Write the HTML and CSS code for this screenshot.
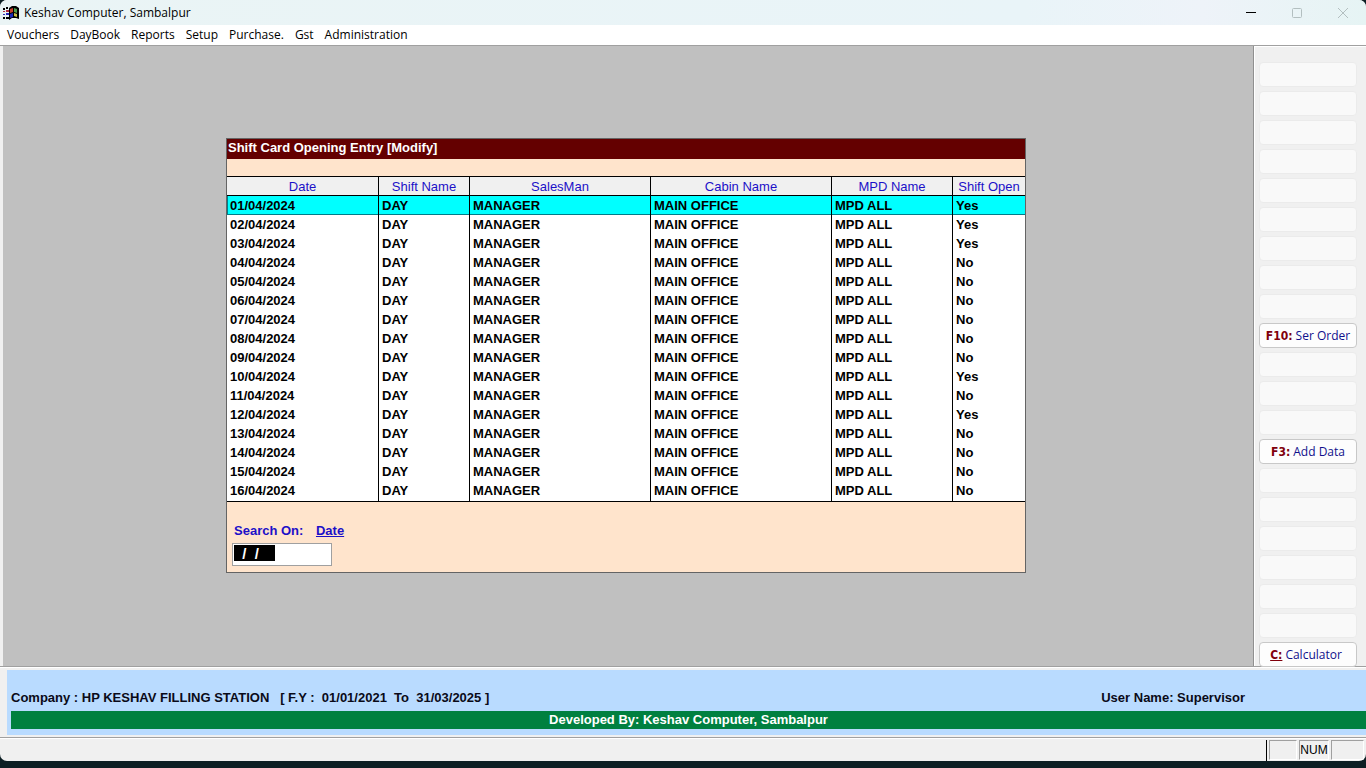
FILE: index.html
```html
<!DOCTYPE html>
<html lang="en">
<head>
<meta charset="utf-8">
<title>Keshav Computer, Sambalpur</title>
<link rel="stylesheet" href="styles.css">
</head>
<body>
<div class="window">
  <header class="titlebar">
    <svg class="app-icon" viewBox="0 0 16 16" aria-hidden="true">
      <path d="M6 3 9 1h4l3 2v11l-3-1H9l-3 2z" fill="#000"/>
      <path d="M7 4l3-1v4L7 8z" fill="#c8402c"/>
      <path d="M11 3l3 1v4l-3-1z" fill="#4f9c4c"/>
      <path d="M7 9l3-1v4l-3 1z" fill="#1b28b8"/>
      <path d="M11 8l3 1v3l-3-1z" fill="#c9bd45"/>
      <path d="M0 3h2v2H0zM3 2h2v2H3zM0 12h2v2H0zM3 12h3v2H3z" fill="#000"/>
      <path d="M0 6h2v1H0zM3 5h3v2H3z" fill="#b02a3c"/>
      <path d="M0 9h2v1H0zM3 8h3v2H3z" fill="#2a2ab8"/>
    </svg>
    <span class="app-title">Keshav Computer, Sambalpur</span>
    <div class="controls">
      <button class="control" type="button" aria-label="Minimize"><svg viewBox="0 0 12 12"><path d="M1 5.5h10" stroke="#000"/></svg></button>
      <button class="control" type="button" aria-label="Maximize" disabled><svg viewBox="0 0 12 12"><rect x="1.5" y="1.5" width="9" height="9" rx="1" fill="none" stroke="#b3bfc0"/></svg></button>
      <button class="control" type="button" aria-label="Close" disabled><svg viewBox="0 0 12 12"><path d="M1 1l10 10M11 1 1 11" stroke="#b3bfc0"/></svg></button>
    </div>
  </header>
  <nav class="menubar">
    <button type="button">Vouchers</button>
    <button type="button">DayBook</button>
    <button type="button">Reports</button>
    <button type="button">Setup</button>
    <button type="button">Purchase.</button>
    <button type="button">Gst</button>
    <button type="button">Administration</button>
  </nav>
  <div class="body">
    <main class="workspace">
      <section class="panel">
        <h1 class="panel-title">Shift Card Opening Entry [Modify]</h1>
        <table class="grid">
          <colgroup><col class="c-date"><col class="c-shift"><col class="c-sales"><col class="c-cabin"><col class="c-mpd"><col class="c-open"></colgroup>
          <thead><tr><th>Date</th><th>Shift Name</th><th>SalesMan</th><th>Cabin Name</th><th>MPD Name</th><th>Shift Open</th></tr></thead>
          <tbody>
            <tr class="selected"><td>01/04/2024</td><td>DAY</td><td>MANAGER</td><td>MAIN OFFICE</td><td>MPD ALL</td><td>Yes</td></tr>
            <tr><td>02/04/2024</td><td>DAY</td><td>MANAGER</td><td>MAIN OFFICE</td><td>MPD ALL</td><td>Yes</td></tr>
            <tr><td>03/04/2024</td><td>DAY</td><td>MANAGER</td><td>MAIN OFFICE</td><td>MPD ALL</td><td>Yes</td></tr>
            <tr><td>04/04/2024</td><td>DAY</td><td>MANAGER</td><td>MAIN OFFICE</td><td>MPD ALL</td><td>No</td></tr>
            <tr><td>05/04/2024</td><td>DAY</td><td>MANAGER</td><td>MAIN OFFICE</td><td>MPD ALL</td><td>No</td></tr>
            <tr><td>06/04/2024</td><td>DAY</td><td>MANAGER</td><td>MAIN OFFICE</td><td>MPD ALL</td><td>No</td></tr>
            <tr><td>07/04/2024</td><td>DAY</td><td>MANAGER</td><td>MAIN OFFICE</td><td>MPD ALL</td><td>No</td></tr>
            <tr><td>08/04/2024</td><td>DAY</td><td>MANAGER</td><td>MAIN OFFICE</td><td>MPD ALL</td><td>No</td></tr>
            <tr><td>09/04/2024</td><td>DAY</td><td>MANAGER</td><td>MAIN OFFICE</td><td>MPD ALL</td><td>No</td></tr>
            <tr><td>10/04/2024</td><td>DAY</td><td>MANAGER</td><td>MAIN OFFICE</td><td>MPD ALL</td><td>Yes</td></tr>
            <tr><td>11/04/2024</td><td>DAY</td><td>MANAGER</td><td>MAIN OFFICE</td><td>MPD ALL</td><td>No</td></tr>
            <tr><td>12/04/2024</td><td>DAY</td><td>MANAGER</td><td>MAIN OFFICE</td><td>MPD ALL</td><td>Yes</td></tr>
            <tr><td>13/04/2024</td><td>DAY</td><td>MANAGER</td><td>MAIN OFFICE</td><td>MPD ALL</td><td>No</td></tr>
            <tr><td>14/04/2024</td><td>DAY</td><td>MANAGER</td><td>MAIN OFFICE</td><td>MPD ALL</td><td>No</td></tr>
            <tr><td>15/04/2024</td><td>DAY</td><td>MANAGER</td><td>MAIN OFFICE</td><td>MPD ALL</td><td>No</td></tr>
            <tr><td>16/04/2024</td><td>DAY</td><td>MANAGER</td><td>MAIN OFFICE</td><td>MPD ALL</td><td>No</td></tr>
          </tbody>
        </table>
        <div class="search">
          <label class="search-label" for="search">Search On: <span class="search-field">Date</span></label>
          <input class="search-input" id="search" type="text" value="  /  /    ">
        </div>
      </section>
    </main>
    <aside class="sidebar">
      <button type="button" disabled></button>
      <button type="button" disabled></button>
      <button type="button" disabled></button>
      <button type="button" disabled></button>
      <button type="button" disabled></button>
      <button type="button" disabled></button>
      <button type="button" disabled></button>
      <button type="button" disabled></button>
      <button type="button" disabled></button>
      <button type="button"><b>F10:</b>Ser Order</button>
      <button type="button" disabled></button>
      <button type="button" disabled></button>
      <button type="button" disabled></button>
      <button type="button"><b>F3:</b>Add Data</button>
      <button type="button" disabled></button>
      <button type="button" disabled></button>
      <button type="button" disabled></button>
      <button type="button" disabled></button>
      <button type="button" disabled></button>
      <button type="button" disabled></button>
      <button class="calculator" type="button"><b><u>C:</u></b>Calculator</button>
    </aside>
  </div>
  <footer class="info">
    <div class="info-inner">
      <div class="info-row">
        <span class="company">Company : HP KESHAV FILLING STATION   [ F.Y :  01/01/2021  To  31/03/2025 ]</span>
        <span>User Name: Supervisor</span>
      </div>
      <div class="developer">Developed By: Keshav Computer, Sambalpur</div>
    </div>
  </footer>
  <div class="statusbar">
    <span class="status-main"></span>
    <span class="status-cell status-first"></span>
    <span class="status-cell">NUM</span>
    <span class="status-cell status-last"></span>
  </div>
</div>
</body>
</html>
```

FILE: styles.css
```css
* { box-sizing: border-box; }

body {
  margin: 0;
  height: 100vh;
  padding-bottom: 7px;
  background: #0d1f24;
  color: #000;
  font-family: "Liberation Sans", Arial, sans-serif;
  font-size: 13px;
}

button { font: inherit; }

.window {
  display: flex;
  flex-direction: column;
  height: 100%;
  overflow: hidden;
  border-radius: 7px;
  background: #f0f0f0;
}

.titlebar {
  display: flex;
  align-items: center;
  height: 25px;
  padding-left: 3px;
  background: linear-gradient(90deg, #eaf4f5, #e9f4f8 75%, #eef3f9 88%, #e6f4f4);
  font-family: "Open Sans", sans-serif;
  font-size: 12px;
}

.app-icon { width: 16px; height: 16px; margin-right: 5px; }

.controls { display: flex; margin-left: auto; }

.control {
  display: flex;
  align-items: center;
  justify-content: center;
  width: 46px;
  height: 24px;
  padding: 0;
  border: 0;
  background: none;
}

.control svg { width: 12px; height: 12px; }

.menubar {
  display: flex;
  gap: 11px;
  height: 20px;
  padding-left: 7px;
  background: #fff;
  font-family: "Open Sans", sans-serif;
  font-size: 12px;
}

.menubar button {
  padding: 0;
  border: 0;
  background: none;
  color: #000;
  line-height: 20px;
}

.body {
  display: flex;
  flex: 1;
  min-height: 0;
  border-top: 1px solid #a0a0a0;
  border-bottom: 1px solid #a0a0a0;
}

.workspace {
  display: flex;
  flex: 1;
  align-items: center;
  justify-content: center;
  padding: 0 4px 1px 0;
  border-left: 3px solid #f0f0f0;
  background: #c0c0c0;
}

.panel {
  width: 800px;
  max-width: 100%;
  border: 1px solid #646464;
  background: #ffe4cc;
}

.panel-title {
  height: 20px;
  margin: 0 0 17px;
  padding-left: 1px;
  background: #640000;
  color: #fff;
  font-size: 13px;
  font-weight: bold;
  line-height: 18px;
}

.grid {
  width: 100%;
  border-top: 1px solid #000;
  border-bottom: 1px solid #000;
  border-spacing: 0;
  table-layout: fixed;
  background: #fff;
}

.c-date { width: 152px; }
.c-shift { width: 91px; }
.c-sales, .c-cabin { width: 181px; }
.c-mpd { width: 121px; }
.c-open { width: 72px; }

.grid th, .grid td {
  height: 19px;
  padding: 0 3px;
  border-right: 1px solid #000;
  line-height: 19px;
  white-space: nowrap;
}

.grid th {
  padding: 1px 0 0;
  border-bottom: 1px solid #000;
  background: #f0f0f0;
  color: #1c10c8;
  font-weight: normal;
  line-height: 17px;
}

.grid td { font-weight: bold; }

.grid tr:last-child td { padding-bottom: 1px; }

.grid th:last-child, .grid td:last-child { border-right: 0; }

.grid .selected td {
  background: #0ff;
  box-shadow: inset 0 -1px #007c88;
}

.grid .selected td:first-child { box-shadow: inset 1px -1px #007c88; }

.search {
  display: flex;
  flex-direction: column;
  gap: 4px;
  padding: 20px 5px 6px;
}

.search-label {
  padding-left: 2px;
  color: #1c10c8;
  font-weight: bold;
  line-height: 17px;
}

.search-field { margin-left: 9px; text-decoration: underline; }

.search-input {
  width: 100px;
  height: 23px;
  padding: 0 1px 3px;
  border: 1px solid #a0a0a0;
  border-radius: 0;
  background: linear-gradient(#000, #000) 1px 1px / 41px 16px no-repeat #fff;
  color: #fff;
  font: bold 15px "Liberation Sans", Arial, sans-serif;
}

.sidebar {
  display: flex;
  flex-direction: column;
  gap: 4px;
  width: 113px;
  padding: 16px 9px 0 5px;
  border-left: 1px solid #909090;
  box-shadow: inset 1px 1px #fff;
}

.sidebar button {
  flex: none;
  height: 25px;
  padding: 0;
  border: 1px solid #c8c8c8;
  border-radius: 4px;
  background: #fdfdfd;
  color: #10108c;
  font-family: "Open Sans", sans-serif;
  font-size: 12px;
  line-height: 22px;
}

.sidebar button:disabled { border-color: #ebebeb; background: #f9f9f9; }

.sidebar .calculator { padding-right: 4px; }

.sidebar b {
  margin-right: 3px;
  color: #80000c;
  font-family: "DejaVu Sans Condensed", "DejaVu Sans", sans-serif;
  font-size: 12px;
}

.info {
  padding: 2px 0 2px 7px;
  border-top: 1px solid #fff;
  border-bottom: 1px solid #a0a0a0;
}

.info-inner {
  padding: 20px 0 6px 4px;
  background: #b9dbff;
  font-weight: bold;
}

.info-row {
  display: flex;
  justify-content: space-between;
  padding-right: 121px;
  color: #0a0a18;
  line-height: 16px;
}

.company { white-space: pre; }

.developer {
  height: 18px;
  margin-top: 5px;
  background: #008040;
  color: #fff;
  line-height: 17px;
  text-align: center;
}

.statusbar {
  display: flex;
  gap: 2px;
  height: 23px;
  padding: 1px 2px 0 0;
  border-top: 1px solid #fff;
}

.status-main { flex: 1; border-right: 1px solid #000; }

.status-cell {
  width: 30px;
  height: 20px;
  border: 1px solid;
  border-color: #a0a0a0 #fff #fff #a0a0a0;
  font-size: 12px;
  line-height: 18px;
  text-align: center;
}

.status-first { width: 28px; }

.status-last { width: 33px; }
```
